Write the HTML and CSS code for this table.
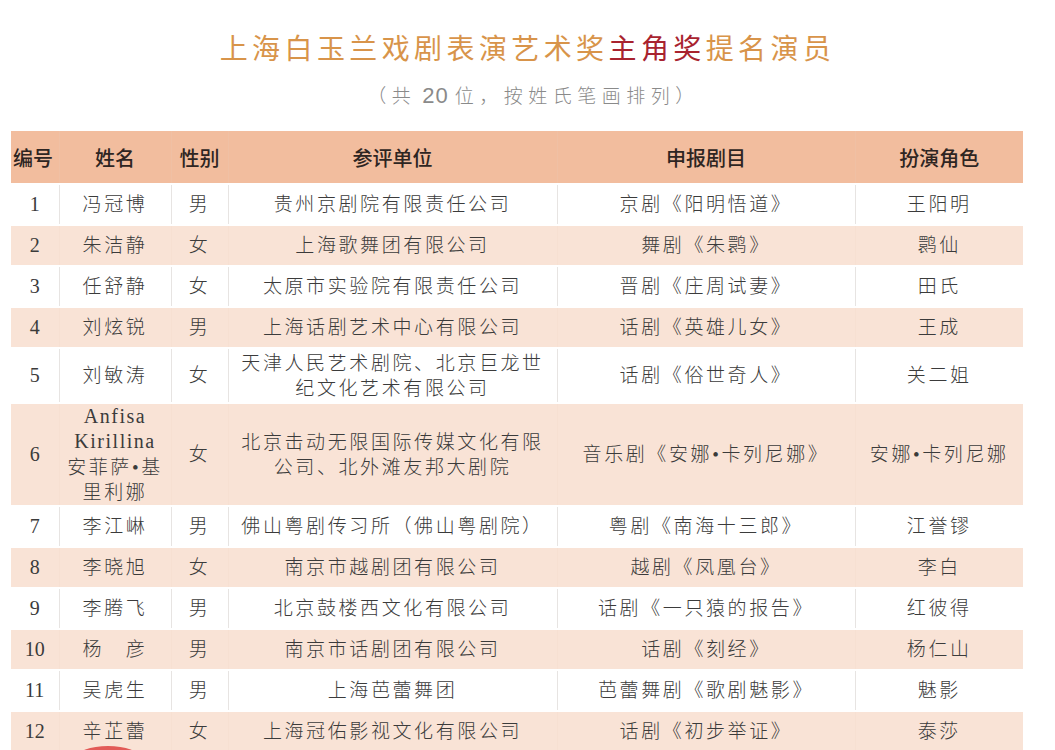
FILE: index.html
```html
<!DOCTYPE html>
<html lang="zh">
<head>
<meta charset="utf-8">
<title>上海白玉兰戏剧表演艺术奖主角奖提名演员</title>
<link rel="stylesheet" href="styles.css">
</head>
<body>
<div class="page">
  <header class="heading">
    <h1 class="title"><span class="gold">上海白玉兰戏剧表演艺术奖</span><span class="red">主角奖</span><span class="gold">提名演员</span></h1>
    <p class="subtitle">（共<span class="num">20</span>位，按姓氏笔画排列）</p>
  </header>
  <table class="list">
    <colgroup>
      <col class="c-no"><col class="c-name"><col class="c-sex"><col class="c-unit"><col class="c-play"><col class="c-role">
    </colgroup>
    <thead>
      <tr><th>编号</th><th>姓名</th><th>性别</th><th>参评单位</th><th>申报剧目</th><th>扮演角色</th></tr>
    </thead>
    <tbody>
      <tr><td class="no">1</td><td>冯冠博</td><td>男</td><td>贵州京剧院有限责任公司</td><td>京剧《阳明悟道》</td><td>王阳明</td></tr>
      <tr><td class="no">2</td><td>朱洁静</td><td>女</td><td>上海歌舞团有限公司</td><td>舞剧《朱鹮》</td><td>鹮仙</td></tr>
      <tr><td class="no">3</td><td>任舒静</td><td>女</td><td>太原市实验院有限责任公司</td><td>晋剧《庄周试妻》</td><td>田氏</td></tr>
      <tr><td class="no">4</td><td>刘炫锐</td><td>男</td><td>上海话剧艺术中心有限公司</td><td>话剧《英雄儿女》</td><td>王成</td></tr>
      <tr class="two"><td class="no">5</td><td>刘敏涛</td><td>女</td><td>天津人民艺术剧院、北京巨龙世<br>纪文化艺术有限公司</td><td>话剧《俗世奇人》</td><td>关二姐</td></tr>
      <tr class="four"><td class="no">6</td><td class="latin">Anfisa<br>Kirillina<br><span class="cjk">安菲萨•基<br>里利娜</span></td><td>女</td><td>北京击动无限国际传媒文化有限<br>公司、北外滩友邦大剧院</td><td>音乐剧《安娜•卡列尼娜》</td><td>安娜•卡列尼娜</td></tr>
      <tr><td class="no">7</td><td>李江崊</td><td>男</td><td>佛山粤剧传习所（佛山粤剧院）</td><td>粤剧《南海十三郎》</td><td>江誉镠</td></tr>
      <tr><td class="no">8</td><td>李晓旭</td><td>女</td><td>南京市越剧团有限公司</td><td>越剧《凤凰台》</td><td>李白</td></tr>
      <tr><td class="no">9</td><td>李腾飞</td><td>男</td><td>北京鼓楼西文化有限公司</td><td>话剧《一只猿的报告》</td><td>红彼得</td></tr>
      <tr><td class="no">10</td><td>杨　彦</td><td>男</td><td>南京市话剧团有限公司</td><td>话剧《刻经》</td><td>杨仁山</td></tr>
      <tr><td class="no">11</td><td>吴虎生</td><td>男</td><td>上海芭蕾舞团</td><td>芭蕾舞剧《歌剧魅影》</td><td>魅影</td></tr>
      <tr><td class="no">12</td><td>辛芷蕾</td><td>女</td><td>上海冠佑影视文化有限公司</td><td>话剧《初步举证》</td><td>泰莎</td></tr>
    </tbody>
  </table>
  <div class="arc"></div>
</div>
</body>
</html>
```
FILE: styles.css
```css
html, body {
  margin: 0;
  padding: 0;
  background: #ffffff;
}
.page {
  position: relative;
  width: 1055px;
  height: 750px;
  overflow: hidden;
  font-family: "Liberation Serif", "Noto Sans CJK SC", serif;
}
.heading {
  text-align: center;
  padding-top: 29px;
}
.title {
  margin: 0;
  font-family: "Noto Sans CJK SC", sans-serif;
  font-weight: 400;
  font-size: 28px;
  line-height: 36px;
  letter-spacing: 4.4px;
  padding-left: 0;
}
.gold {
  color: #d8944a;
}
.red {
  color: #a8232f;
}
.subtitle {
  margin: 17px 0 0 0;
  font-family: "Noto Sans CJK SC", sans-serif;
  font-weight: 300;
  font-size: 19px;
  line-height: 26px;
  letter-spacing: 5.5px;
  color: #8a8a8a;
  padding-left: 12px;
}
.subtitle .num {
  font-family: "Liberation Sans", sans-serif;
  font-size: 22px;
  letter-spacing: 1px;
  margin: 0 6px 0 6px;
}
.list {
  margin: 22px 0 0 11px;
  width: 1012px;
  border-collapse: collapse;
  table-layout: fixed;
  color: #3b3b3b;
}
.c-no { width: 48px; }
.c-name { width: 112px; }
.c-sex { width: 57px; }
.c-unit { width: 329px; }
.c-play { width: 298px; }
.c-role { width: 168px; }
.list th {
  height: 52px;
  padding: 0;
  background: #f2bd9e;
  font-family: "Noto Sans CJK SC", sans-serif;
  font-weight: 500;
  font-size: 20px;
  color: #2e2522;
  text-align: center;
  border-left: 1px solid #f0c0a4;
}
.list th:first-child {
  border-left: none;
  text-align: left;
  padding-left: 2px;
}
.list td {
  height: 37px;
  padding: 1px 0;
  text-align: center;
  font-family: "Liberation Serif", "Noto Sans CJK SC", serif;
  font-weight: 300;
  font-size: 19px;
  line-height: 25px;
  letter-spacing: 2.6px;
  border-top: 2px solid #ffffff;
  border-left: 1px solid #e7e4e2;
  background: #ffffff;
}
.list td:first-child {
  border-left: none;
}
.list td.no {
  font-size: 20px;
  letter-spacing: 0;
  font-weight: 400;
}
.list tbody tr:nth-child(even) td {
  background: #f9e3d6;
  border-left-color: #f7e0d2;
}
.list tr.two td {
  height: 51px;
  padding: 1px 0;
}
.list tr.four td {
  height: 101px;
  padding: 0;
}
.list td.latin {
  font-size: 20px;
  letter-spacing: 1.5px;
  line-height: 25.2px;
  font-weight: 400;
}
.list td.latin .cjk {
  font-size: 19px;
  letter-spacing: 2.6px;
  font-weight: 300;
}
.arc {
  position: absolute;
  left: 76px;
  top: 746px;
  width: 64px;
  height: 24px;
  border-radius: 50%;
  background: #e25a57;
}
```
